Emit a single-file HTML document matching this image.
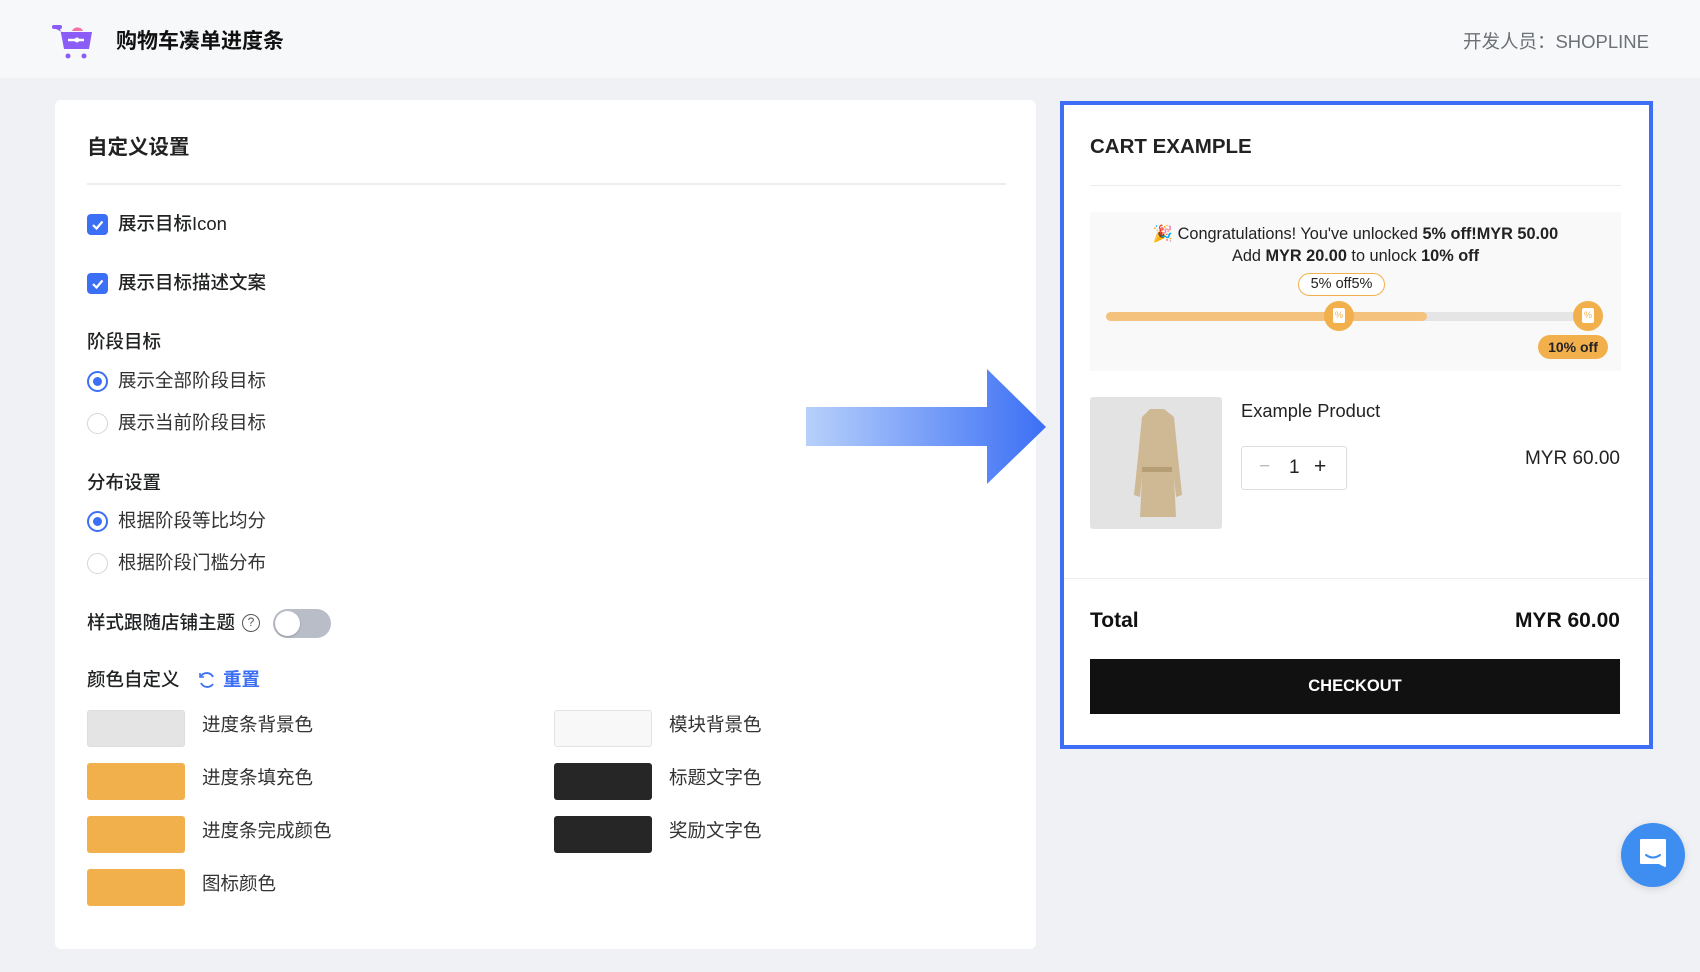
<!DOCTYPE html>
<html><head><meta charset="utf-8"><style>
*{box-sizing:border-box;margin:0;padding:0}
body{width:1700px;height:972px;background:#f0f1f5;font-family:"Liberation Sans","Noto Sans CJK SC",sans-serif;color:#202223;position:relative;overflow:hidden}
.a{position:absolute;white-space:nowrap}
.hdr{left:0;top:0;width:1700px;height:78px;background:#f7f8fa}
.card{left:55px;top:100px;width:981px;height:849px;background:#fff;border-radius:6px}
.t17{font-size:18.5px;line-height:22px}
.b{font-weight:500}
.cb{width:21px;height:21px;background:#3b6ff5;border-radius:4px}
.rd{width:21px;height:21px;border-radius:50%;border:1.5px solid #d4d6dc;background:#fff}
.rd.on{border:2px solid #3b6ff5}
.rd.on::after{content:"";position:absolute;left:4px;top:4px;width:9px;height:9px;border-radius:50%;background:#3b6ff5}
.sw{width:98px;height:37px;border-radius:3px}
.lbl{font-size:18.5px;color:#333}
</style></head><body>
<div class="a hdr"></div>
<svg class="a" style="left:52px;top:22px" width="42" height="38" viewBox="0 0 42 38">
<path d="M2 6h6l4 20h24l3-16H10" fill="#8b5cf6"/><path d="M9 10h31l-3 17H12z" fill="#8b5cf6"/>
<path d="M2 5h6" stroke="#8b5cf6" stroke-width="4" stroke-linecap="round"/>
<path d="M20 9a6 6 0 0 1 11 0z" fill="#f472a6"/>
<path d="M16 18h16" stroke="#fff" stroke-width="2.5"/><circle cx="25" cy="18" r="2.5" fill="#fff"/>
<circle cx="16" cy="34" r="2.5" fill="#8b5cf6"/><circle cx="32" cy="34" r="2.5" fill="#8b5cf6"/></svg>
<div class="a" style="left:116px;top:25px;font-size:21px;font-weight:bold;color:#111">购物车凑单进度条</div>
<div class="a" style="right:51px;top:28px;font-size:18.5px;color:#6d7175">开发人员：SHOPLINE</div>

<div class="a card"></div>
<div class="a" style="left:87px;top:130px;font-size:20.5px;font-weight:bold;color:#222">自定义设置</div>
<div class="a" style="left:87px;top:183px;width:919px;height:1.5px;background:#eceef1"></div>

<div class="a cb" style="left:87px;top:214px"><svg width="21" height="21"><path d="M6 11l3.5 3.5L15.5 7.5" stroke="#fff" stroke-width="2.2" fill="none"/></svg></div>
<div class="a t17 b" style="left:118px;top:213px">展示目标Icon</div>
<div class="a cb" style="left:87px;top:273px"><svg width="21" height="21"><path d="M6 11l3.5 3.5L15.5 7.5" stroke="#fff" stroke-width="2.2" fill="none"/></svg></div>
<div class="a t17 b" style="left:118px;top:272px">展示目标描述文案</div>

<div class="a t17 b" style="left:87px;top:331px">阶段目标</div>
<div class="a rd on" style="left:87px;top:371px"></div><div class="a t17" style="left:118px;top:370px;color:#333">展示全部阶段目标</div>
<div class="a rd" style="left:87px;top:413px"></div><div class="a t17" style="left:118px;top:412px;color:#333">展示当前阶段目标</div>

<div class="a t17 b" style="left:87px;top:472px">分布设置</div>
<div class="a rd on" style="left:87px;top:511px"></div><div class="a t17" style="left:118px;top:510px;color:#333">根据阶段等比均分</div>
<div class="a rd" style="left:87px;top:553px"></div><div class="a t17" style="left:118px;top:552px;color:#333">根据阶段门槛分布</div>

<div class="a t17 b" style="left:87px;top:612px">样式跟随店铺主题</div>
<div class="a" style="left:242px;top:614px;width:18px;height:18px;border:1.5px solid #555;border-radius:50%;font-size:12px;line-height:15px;text-align:center;color:#555">?</div>
<div class="a" style="left:273px;top:609px;width:58px;height:29px;border-radius:15px;background:#b9bdc7"></div>
<div class="a" style="left:275px;top:611px;width:25px;height:25px;border-radius:50%;background:#fff;box-shadow:0 1px 2px rgba(0,0,0,.2)"></div>

<div class="a t17 b" style="left:87px;top:669px">颜色自定义</div>
<svg class="a" style="left:197px;top:670px" width="20" height="20" viewBox="0 0 20 20"><path d="M16 7A7 7 0 0 0 4 6M4 13a7 7 0 0 0 12 1" stroke="#3b6ff5" stroke-width="1.8" fill="none"/><path d="M3 3v4h4" stroke="#3b6ff5" stroke-width="1.6" fill="none"/></svg>
<div class="a t17" style="left:223px;top:669px;color:#3b6ff5;font-weight:bold">重置</div>

<div class="a sw" style="left:87px;top:710px;background:#e4e4e4;border:1px solid #ddd"></div><div class="a lbl" style="left:202px;top:711px">进度条背景色</div>
<div class="a sw" style="left:87px;top:763px;background:#f2b04d"></div><div class="a lbl" style="left:202px;top:764px">进度条填充色</div>
<div class="a sw" style="left:87px;top:816px;background:#f2b04d"></div><div class="a lbl" style="left:202px;top:817px">进度条完成颜色</div>
<div class="a sw" style="left:87px;top:869px;background:#f2b04d"></div><div class="a lbl" style="left:202px;top:870px">图标颜色</div>
<div class="a sw" style="left:554px;top:710px;background:#f8f8f8;border:1px solid #e3e3e3"></div><div class="a lbl" style="left:669px;top:711px">模块背景色</div>
<div class="a sw" style="left:554px;top:763px;background:#262626"></div><div class="a lbl" style="left:669px;top:764px">标题文字色</div>
<div class="a sw" style="left:554px;top:816px;background:#262626"></div><div class="a lbl" style="left:669px;top:817px">奖励文字色</div>

<svg class="a" style="left:806px;top:369px" width="242" height="116"><defs><linearGradient id="g" x1="0" x2="1"><stop offset="0" stop-color="#b7d0fb"/><stop offset="1" stop-color="#3b6ff5"/></linearGradient></defs><path d="M0 38H181V0L240 58L181 115V77H0z" fill="url(#g)"/></svg>

<div class="a" style="left:1060px;top:101px;width:593px;height:648px;background:#fff;border:4px solid #3d6ef5"></div>
<div class="a" style="left:1090px;top:135px;font-size:20.5px;font-weight:bold;color:#222">CART EXAMPLE</div>
<div class="a" style="left:1090px;top:185px;width:531px;height:1px;background:#ececec"></div>
<div class="a" style="left:1090px;top:212px;width:531px;height:159px;background:#f9f9f9"></div>
<div class="a" style="left:1090px;top:224px;width:531px;text-align:center;font-size:16.3px;color:#222">🎉 Congratulations! You've unlocked <b>5% off!MYR 50.00</b></div>
<div class="a" style="left:1090px;top:247px;width:531px;text-align:center;font-size:16.3px;color:#222">Add <b>MYR 20.00</b> to unlock <b>10% off</b></div>
<div class="a" style="left:1298px;top:273px;width:87px;height:23px;border:1.5px solid #f2b04d;border-radius:12px;background:#fff;font-size:14.5px;line-height:20px;text-align:center">5% off5%</div>
<div class="a" style="left:1106px;top:312px;width:482px;height:9px;border-radius:5px;background:#e5e5e5"></div>
<div class="a" style="left:1106px;top:312px;width:321px;height:9px;border-radius:5px;background:#f5c27e"></div>
<div class="a" style="left:1324px;top:301px;width:30px;height:30px;border-radius:50%;background:#f2b04d"></div>
<div class="a" style="left:1333px;top:308px;width:12px;height:15px;background:#fff;border-radius:2px;font-size:9px;color:#f2b04d;text-align:center;line-height:15px">%</div>
<div class="a" style="left:1573px;top:301px;width:30px;height:30px;border-radius:50%;background:#f2b04d"></div>
<div class="a" style="left:1582px;top:308px;width:12px;height:15px;background:#fff;border-radius:2px;font-size:9px;color:#f2b04d;text-align:center;line-height:15px">%</div>
<div class="a" style="left:1538px;top:335px;width:70px;height:24px;border-radius:12px;background:#f2b04d;font-size:14px;line-height:24px;text-align:center;font-weight:bold;color:#222">10% off</div>

<div class="a" style="left:1090px;top:397px;width:132px;height:132px;background:#e3e3e3;border-radius:3px"></div>
<svg class="a" style="left:1128px;top:405px" width="58" height="118" viewBox="0 0 58 118"><path d="M22 4h14l10 8 4 40 4 38-6 2-2-20 2 40H12l2-40-2 20-6-2 4-38 4-40z" fill="#cfb894"/><rect x="14" y="62" width="30" height="5" fill="#b59d76"/></svg>
<div class="a" style="left:1241px;top:400px;font-size:18.3px;color:#222">Example Product</div>
<div class="a" style="left:1241px;top:446px;width:106px;height:44px;border:1px solid #ddd;border-radius:3px"></div>
<div class="a" style="left:1259px;top:456px;font-size:19px;color:#bbb">−</div>
<div class="a" style="left:1289px;top:457px;font-size:19px;color:#222">1</div>
<div class="a" style="left:1314px;top:455px;font-size:21px;color:#222">+</div>
<div class="a" style="left:1500px;top:448px;width:120px;text-align:right;font-size:19px;color:#222">MYR 60.00</div>
<div class="a" style="left:1064px;top:578px;width:585px;height:1px;background:#ececec"></div>
<div class="a" style="left:1090px;top:609px;font-size:21px;font-weight:bold;color:#111">Total</div>
<div class="a" style="left:1420px;top:609px;width:200px;text-align:right;font-size:21px;font-weight:bold;color:#111">MYR 60.00</div>
<div class="a" style="left:1090px;top:659px;width:530px;height:55px;background:#111;color:#fff;font-weight:bold;font-size:16.5px;line-height:55px;text-align:center">CHECKOUT</div>

<div class="a" style="left:1621px;top:823px;width:64px;height:64px;border-radius:50%;background:#3d8ef0;box-shadow:0 2px 8px rgba(0,0,0,.12)"></div>
<svg class="a" style="left:1637px;top:838px" width="32" height="34" viewBox="0 0 32 34"><path d="M4 2h24v26l-6-3H4z" fill="#fff" stroke="#fff" stroke-width="2" stroke-linejoin="round"/><path d="M9 17q7 5 14 0" stroke="#3d8ef0" stroke-width="2" fill="none" stroke-linecap="round"/></svg>
</body></html>
